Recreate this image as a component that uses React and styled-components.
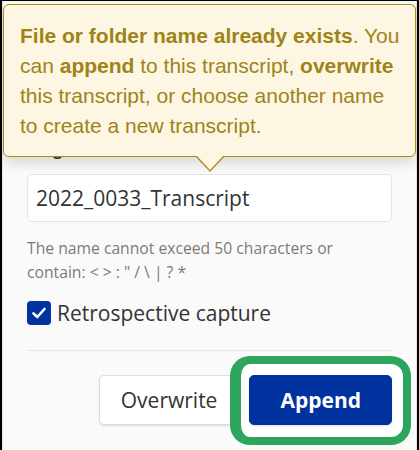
import React from "react";
import styled, { createGlobalStyle } from "styled-components";

const GlobalStyle = createGlobalStyle`
  html, body {
    margin: 0;
    padding: 0;
    background: #ffffff;
  }
  * {
    box-sizing: border-box;
  }
`;

const Frame = styled.div`
  position: relative;
  width: 419px;
  height: 450px;
  overflow: hidden;
  border-top: 1px solid #000;
  border-left: 2px solid #000;
  border-right: 2px solid #000;
  background: #e6e6e6;
  padding: 0 1px;
  display: flex;
`;

const Panel = styled.section`
  flex: 1;
  display: flex;
  flex-direction: column;
  background: #fafafa;
  padding: 137px 24px 0;
  font-family: "Open Sans", "Noto Sans", sans-serif;
  color: #333;
`;

const Label = styled.label`
  font-size: 16px;
  font-weight: 700;
  line-height: 22px;
  color: #333;
`;

const Input = styled.input`
  margin-top: 14px;
  height: 48px;
  width: 100%;
  border: 1px solid #e4e4e4;
  border-radius: 5px;
  background: #fff;
  padding: 0 8px;
  font-family: "Open Sans", "Noto Sans", sans-serif;
  font-size: 21px;
  color: #333;
  outline: none;
`;

const Hint = styled.p`
  margin: 14px 0 0;
  font-size: 15.7px;
  line-height: 24px;
  color: #7a7a7a;
`;

const CheckRow = styled.label`
  margin-top: 17px;
  display: flex;
  align-items: center;
  gap: 6px;
  font-size: 21px;
  line-height: 24px;
  color: #333;
`;

const Box = styled.span`
  width: 24px;
  height: 24px;
  border-radius: 4px;
  background: #0033a0;
  display: flex;
  align-items: center;
  justify-content: center;
`;

const Divider = styled.hr`
  margin: 25px 0 0;
  border: none;
  border-top: 1px solid #e6e6e6;
`;

const ButtonRow = styled.div`
  margin-top: 24px;
  display: flex;
  justify-content: flex-end;
  gap: 10px;
`;

const Button = styled.button`
  height: 50px;
  border-radius: 5px;
  font-family: "Open Sans", "Noto Sans", sans-serif;
  font-size: 21px;
  padding: 0 ${(p) => (p.primary ? "30px" : "21px")};
  border: 1px solid ${(p) => (p.primary ? "#0033a0" : "#dcdcdc")};
  background: ${(p) => (p.primary ? "#0033a0" : "#fff")};
  color: ${(p) => (p.primary ? "#fff" : "#333")};
  font-weight: ${(p) => (p.primary ? 700 : 400)};
  box-shadow: 0 1px 2px rgba(0, 0, 0, 0.12);
`;

const Highlight = styled.span`
  display: flex;
  margin: -19px -19px -20px;
  padding: 11px 11px 12px 8px;
  border: 8px solid #2da55c;
  border-left-width: 11px;
  border-radius: 20px;
  background: #fff;
`;

const Tooltip = styled.div`
  position: absolute;
  left: 1px;
  top: 3px;
  width: 413px;
  height: 153px;
  padding: 16px 6px 0 16px;
  background: #fdf6e3;
  border: 1px solid #a88e10;
  border-radius: 6px;
  box-shadow: 0 6px 14px rgba(0, 0, 0, 0.14);
  font-family: "Liberation Sans", Arial, sans-serif;
  font-size: 21px;
  line-height: 30px;
  color: #9e8418;
  white-space: nowrap;

  b {
    font-weight: 700;
  }

  &::before,
  &::after {
    content: "";
    position: absolute;
    left: 50%;
    transform: translateX(-50%);
    width: 0;
    height: 0;
    border-left: 15px solid transparent;
    border-right: 15px solid transparent;
  }
  &::before {
    top: 100%;
    border-top: 16px solid #a88e10;
  }
  &::after {
    top: calc(100% - 1px);
    border-left-width: 14px;
    border-right-width: 14px;
    border-top: 15px solid #fdf6e3;
  }
`;

const Check = () => (
  <svg width="16" height="16" viewBox="0 0 16 16" fill="none">
    <path
      d="M2.5 8.5 L6.3 12 L13.5 4"
      stroke="#fff"
      strokeWidth="2.6"
      strokeLinecap="round"
      strokeLinejoin="round"
    />
  </svg>
);

export default function App() {
  return (
    <>
      <GlobalStyle />
      <Frame>
        <Panel>
          <Label>Target name</Label>
          <Input defaultValue="2022_0033_Transcript" />
          <Hint>
            The name cannot exceed 50 characters or
            <br />
            contain: &lt; &gt; : " / \ | ? *
          </Hint>
          <CheckRow>
            <Box>
              <Check />
            </Box>
            Retrospective capture
          </CheckRow>
          <Divider />
          <ButtonRow>
            <Button>Overwrite</Button>
            <Highlight>
              <Button primary>Append</Button>
            </Highlight>
          </ButtonRow>
        </Panel>
        <Tooltip>
          <b>File or folder name already exists</b>. You
          <br />
          can <b>append</b> to this transcript, <b>overwrite</b>
          <br />
          this transcript, or choose another name
          <br />
          to create a new transcript.
        </Tooltip>
      </Frame>
    </>
  );
}
